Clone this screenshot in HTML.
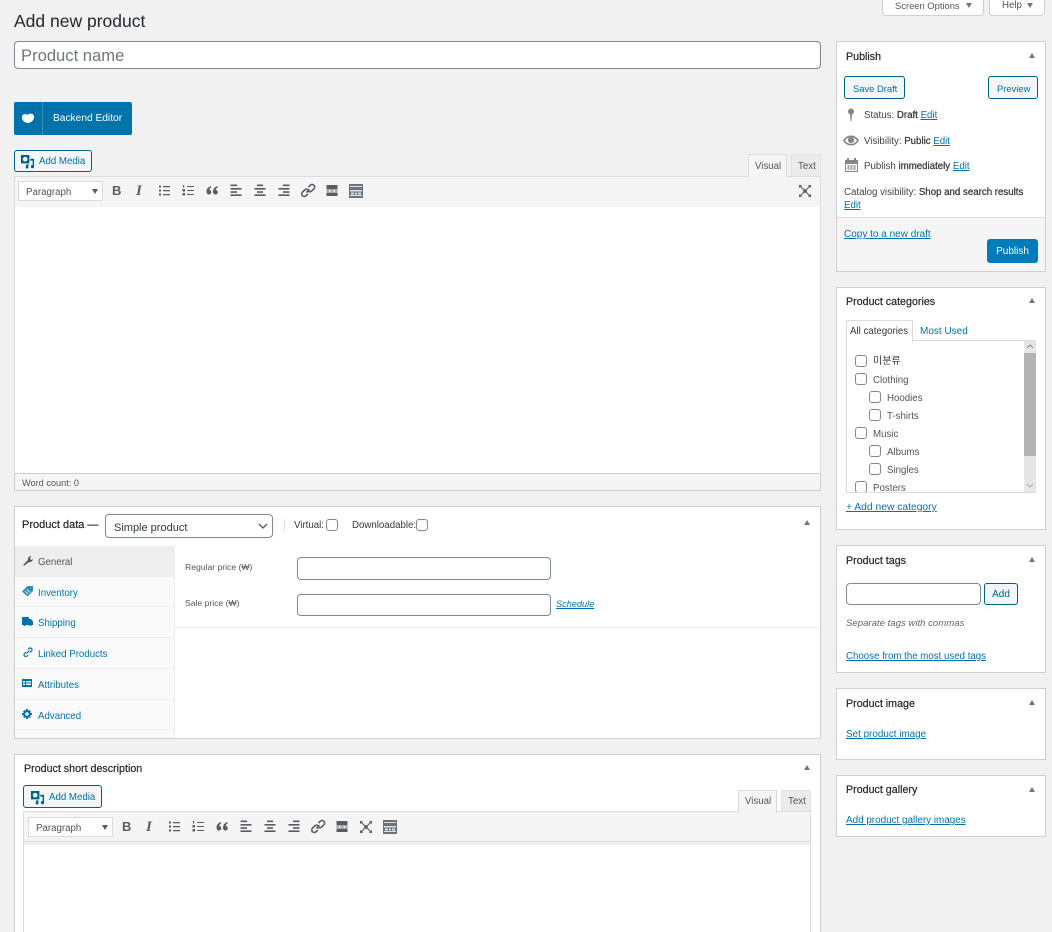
<!DOCTYPE html>
<html lang="en"><head><meta charset="utf-8"><title>Add new product</title>
<style>
html,body{margin:0;padding:0;width:1052px;height:932px;overflow:hidden;background:#f1f1f1}
body{position:relative;font-family:"Liberation Sans","Noto Sans CJK KR",sans-serif;font-size:9.7px;color:#444}
div,span,a,svg{position:absolute;box-sizing:border-box;white-space:nowrap}
a,.l{color:#0073aa;text-decoration:underline}
.t{line-height:14px}
.h{font-size:10.7px;color:#23282d;line-height:14px;font-weight:normal;-webkit-text-stroke:.2px #23282d}
.m{-webkit-text-stroke:.25px #32373c;color:#32373c}
.box{background:#fff;border:1px solid #ccd0d4}
.btn{background:#f3f5f6;border:1px solid #016087;border-radius:3px;color:#016087;text-align:center}
.inp{background:#fff;border:1px solid #7e8993;border-radius:4px}
.cb{width:12px;height:12px;background:#fff;border:1px solid #7e8993;border-radius:3px}
.tri{width:0;height:0;border-left:3.5px solid transparent;border-right:3.5px solid transparent;border-bottom:5px solid #72777c}
.tb{background:#f5f5f5;border:1px solid #dcdcde}
.ic{width:20px;height:20px;fill:#555d66}
</style></head><body>
<svg width="0" height="0" style="left:0;top:0"><defs>
<symbol id="ul" viewBox="0 0 20 20"><path d="M5 4.500h2v2H5zM9 5h7v1.200H9zM5 8.500h2v2H5zM9 9h7v1.200H9zM5 12.500h2v2H5zM9 13h7v1.200H9z"/></symbol>
<symbol id="ol" viewBox="0 0 20 20"><path d="M5 4h1.200v2.500H5zM4.500 8h2.500v2.500H4.500zM4.500 12h2.500v2.500H4.500zM9 5h7v1H9zM9 9h7v1H9zM9 13h7v1H9z"/></symbol>
<symbol id="q" viewBox="0 0 20 20"><path d="M9 5C6.500 5.800 4.500 7.800 4.500 10.500 4.500 12.500 5.800 13.500 7 13.500S9.300 12.500 9.300 11.200 8.300 9 7.200 9c0-1 .8-2 1.800-2.400zM15.500 5C13 5.800 11 7.800 11 10.500c0 2 1.300 3 2.500 3s2.300-1 2.300-2.300-1-2.200-2.100-2.200c0-1 .8-2 1.800-2.400z"/></symbol>
<symbol id="al" viewBox="0 0 20 20"><path d="M4.500 3.500h6.500v1.600H4.500zM4.500 7h11v1.600h-11zM4.500 10.300h6.500v1.600H4.500zM4.500 13.400h11v1.600h-11z"/></symbol>
<symbol id="ac" viewBox="0 0 20 20"><path d="M7 3.500h6v1.600H7zM4.500 7h11v1.600h-11zM7 10.300h6v1.600H7zM4.500 13.400h11v1.600h-11z"/></symbol>
<symbol id="ar" viewBox="0 0 20 20"><path d="M9 3.500h6.500v1.600H9zM4.500 7h11v1.600h-11zM9 10.300h6.500v1.600H9zM4.500 13.400h11v1.600h-11z"/></symbol>
<symbol id="ln" viewBox="0 0 20 20"><path d="M8.500 11.500 11.500 8.500M10.500 6l1.800-1.800a2.600 2.600 0 0 1 3.500 0l.1.100a2.600 2.600 0 0 1 0 3.500l-2.300 2.300a2.600 2.600 0 0 1-3.500 0M9.800 13 8 14.800a2.600 2.600 0 0 1-3.500 0l-.1-.1a2.600 2.600 0 0 1 0-3.500l2.300-2.300a2.600 2.600 0 0 1 3.500 0" fill="none" stroke="#555d66" stroke-width="1.600"/></symbol>
<symbol id="hr" viewBox="0 0 20 20"><path d="M4.500 4h11v4.500h-11zM4.500 9.500h2.500v1H4.500zM8.500 9.500H11.500v1H8.500zM13 9.500h2.500v1H13zM4.500 11.500h11V15h-11z"/></symbol>
<symbol id="kt" viewBox="0 0 20 20"><path d="M3 3h14v14H3z" fill="#6b7278"/><path d="M4 5h12v1H4zM4 9h12v1.500H4zM4 14h12v1H4z" fill="#dfe1e3"/><path d="M5 11.500h3v2H5zM9 11.500h2v2H9zM12 11.500h3v2h-3z" fill="#dfe1e3"/></symbol>
<symbol id="fs" viewBox="0 0 20 20"><path d="M8.200 8.200h3.600v3.600H8.200z"/><path d="M5 5l3.500 3.500M15 5l-3.500 3.500M5 15l3.500-3.500M15 15l-3.500-3.500" stroke="#555d66" stroke-width="1.100" fill="none"/><path d="M4 4h2.600v1.100H5.100v1.500H4zM16 4v2.600h-1.100V5.100h-1.500V4zM4 16v-2.600h1.100v1.500h1.500V16zM16 16h-2.600v-1.100h1.500v-1.500H16z"/></symbol>
<symbol id="am" viewBox="0 0 16 16"><path d="M1 1h9v9H1zM5.500 3a2.500 2.500 0 1 0 0 5 2.500 2.500 0 0 0 0-5z" fill="#016087" fill-rule="evenodd"/><path d="M11 5h4v8.500a1.700 1.700 0 1 1-1.500-1.700V7H11zM6.500 11H9v3a1.500 1.500 0 1 1-2.500-1.100z" fill="#016087"/></symbol>
</defs></svg>

<!-- top tabs -->
<div style="left:882px;top:-1px;width:102px;height:17px;background:#fff;border:1px solid #ccd0d4;border-radius:0 0 4px 4px"></div>
<span class="t" style="left:895px;top:-2px;color:#555;font-size:9.4px;margin-top:1px">Screen Options</span>
<span style="left:966px;top:3px;width:0;height:0;border-left:3px solid transparent;border-right:3px solid transparent;border-top:5px solid #72777c"></span>
<div style="left:989px;top:-1px;width:56px;height:17px;background:#fff;border:1px solid #ccd0d4;border-radius:0 0 4px 4px"></div>
<span class="t" style="left:1002px;top:-1px;color:#555">Help</span>
<span style="left:1027px;top:3px;width:0;height:0;border-left:3px solid transparent;border-right:3px solid transparent;border-top:5px solid #72777c"></span>

<span style="left:14px;top:10px;font-size:17.500px;line-height:22px;color:#23282d">Add new product</span>

<div class="inp" style="left:14px;top:41px;width:807px;height:28px"></div>
<span style="left:21px;top:45px;font-size:16.600px;line-height:22px;color:#72777c">Product name</span>

<!-- backend editor -->
<div style="left:14px;top:102px;width:118px;height:33px;background:#0073aa;border-radius:2px"></div>
<div style="left:42px;top:102px;width:1px;height:33px;background:#3a8fb7"></div>
<svg style="left:21px;top:113px" width="14" height="11" viewBox="0 0 14 11"><path d="M1 4C1 1 5 0 6.500 2 8 0 13 0 13 4 13 8 9 10 7 10 4 10 1 8 1 4z" fill="#fff"/></svg>
<span class="t" style="left:53px;top:112px;font-size:10.200px;color:#fff">Backend Editor</span>

<!-- add media -->
<div class="btn" style="left:14px;top:150px;width:78px;height:22px"></div>
<svg style="left:20px;top:154px" width="15" height="15"><use href="#am"/></svg>
<span class="t" style="left:39px;top:155px;color:#0071a1">Add Media</span>

<!-- tabs -->
<div style="left:748px;top:154px;width:39px;height:23px;background:#f5f5f5;border:1px solid #dcdcde;border-bottom:0;z-index:2"></div>
<span class="t" style="left:755px;top:160px;color:#555;z-index:3">Visual</span>
<div style="left:791px;top:154px;width:30px;height:22px;background:#ebebeb;border:1px solid #e2e2e2;border-bottom:0"></div>
<span class="t" style="left:798px;top:160px;color:#555">Text</span>

<!-- main editor -->
<div class="tb" style="left:14px;top:176px;width:807px;height:32px"></div>
<div style="left:18px;top:181px;width:85px;height:20px;background:#fff;border:1px solid #dcdcde"></div>
<span class="t" style="left:26px;top:185px;color:#555;margin-top:1px">Paragraph</span>
<span style="left:92px;top:189px;width:0;height:0;border-left:3.500px solid transparent;border-right:3.500px solid transparent;border-top:5px solid #555d66"></span>
<span style="left:112px;top:183px;font:bold 13px/16px 'Liberation Sans',sans-serif;color:#555d66">B</span>
<span style="left:136px;top:183px;font:italic bold 15px/17px 'Liberation Serif',serif;color:#555d66">I</span>
<svg class="ic" style="left:154px;top:181px"><use href="#ul"/></svg>
<svg class="ic" style="left:178px;top:181px"><use href="#ol"/></svg>
<svg class="ic" style="left:202px;top:181px"><use href="#q"/></svg>
<svg class="ic" style="left:226px;top:181px"><use href="#al"/></svg>
<svg class="ic" style="left:250px;top:181px"><use href="#ac"/></svg>
<svg class="ic" style="left:274px;top:181px"><use href="#ar"/></svg>
<svg class="ic" style="left:298px;top:181px"><use href="#ln"/></svg>
<svg class="ic" style="left:322px;top:181px"><use href="#hr"/></svg>
<svg class="ic" style="left:346px;top:181px"><use href="#kt"/></svg>
<svg class="ic" style="left:795px;top:181px"><use href="#fs"/></svg>
<div style="left:14px;top:207px;width:807px;height:267px;background:#fff;border-left:1px solid #dcdcde;border-right:1px solid #dcdcde"></div>
<div style="left:14px;top:473px;width:807px;height:18px;background:#f5f5f5;border:1px solid #ccd0d4"></div>
<span class="t" style="left:22px;top:475px;color:#555;font-size:9.200px;margin-top:1px">Word count: 0</span>

<!-- product data -->
<div class="box" style="left:14px;top:506px;width:807px;height:233px"></div>
<span class="h" style="left:22px;top:518px;font-size:11px">Product data —</span>
<div class="inp" style="left:105px;top:514px;width:168px;height:24px"></div>
<span class="t" style="left:114px;top:521px;font-size:11px;color:#32373c">Simple product</span>
<svg style="left:258px;top:523px" width="10" height="7"><path d="M1 1l4 4 4-4" fill="none" stroke="#555" stroke-width="1.300"/></svg>
<div style="left:284px;top:519px;width:1px;height:12px;background:#ddd"></div>
<span class="t" style="left:294px;top:519px;color:#32373c">Virtual:</span>
<div class="cb" style="left:326px;top:519px"></div>
<span class="t" style="left:352px;top:519px;color:#32373c">Downloadable:</span>
<div class="cb" style="left:416px;top:519px"></div>
<div class="tri" style="left:804px;top:520px"></div>

<div style="left:15px;top:546px;width:160px;height:192px;background:#fafafa;border-right:1px solid #eee"></div>
<div style="left:15px;top:546px;width:160px;height:31px;background:#eee"></div>
<div style="left:15px;top:606px;width:159px;height:1px;background:#eee"></div>
<div style="left:15px;top:637px;width:159px;height:1px;background:#eee"></div>
<div style="left:15px;top:668px;width:159px;height:1px;background:#eee"></div>
<div style="left:15px;top:699px;width:159px;height:1px;background:#eee"></div>
<div style="left:15px;top:729px;width:159px;height:1px;background:#eee"></div>

<svg style="left:22px;top:555px" width="11" height="11" viewBox="0 0 11 11"><path d="M1 10 6 5C5.500 3 7 1 9.500 1L8 3l.5 1.500L10 5l1-1.500C11 6 9 7.500 7 7l-4.500 3.500z" fill="#555"/></svg>
<span class="t" style="left:38px;top:555px;color:#555;margin-top:1px">General</span>
<svg style="left:22px;top:586px" width="11" height="11" viewBox="0 0 11 11"><path d="M0 5.500 5.500 0H11V5L5.500 10.500z" fill="#0073aa" opacity=".8"/><path d="M3 5l3 3M5 3.500l3 3" stroke="#fff" stroke-width=".8"/></svg>
<span class="t" style="left:38px;top:587px;color:#0073aa">Inventory</span>
<svg style="left:22px;top:616px" width="11" height="11" viewBox="0 0 11 11"><path d="M0 1h7v2h2l2 2.500V9H9.500a1 1 0 0 1-2 0h-4a1 1 0 0 1-2 0H0z" fill="#0073aa"/></svg>
<span class="t" style="left:38px;top:617px;color:#0073aa">Shipping</span>
<svg style="left:23px;top:647px" width="10" height="11" viewBox="0 0 10 11"><path d="M3.500 6.500l3-3M5 2.500 6 1.500a1.700 1.700 0 0 1 2.500 2.500L7 5.500M5 8 4 9a1.700 1.700 0 0 1-2.500-2.500L3 5" fill="none" stroke="#0073aa" stroke-width="1.200"/></svg>
<span class="t" style="left:38px;top:648px;color:#0073aa">Linked Products</span>
<svg style="left:22px;top:678px" width="10" height="10" viewBox="0 0 10 10"><path d="M0 1h10v8H0zm1 2v1.500h2V3zm3 0v1.500h5V3zM1 5.500V7h2V5.500zm3 0V7h5V5.500z" fill="#0073aa" fill-rule="evenodd"/></svg>
<span class="t" style="left:38px;top:679px;color:#0073aa">Attributes</span>
<svg style="left:22px;top:709px" width="10" height="10" viewBox="0 0 10 10"><circle cx="5" cy="5" r="2.800" fill="none" stroke="#0073aa" stroke-width="2"/><path d="M4 0h2v2H4zM4 8h2v2H4zM0 4h2v2H0zM8 4h2v2H8zM1 2.400 2.400 1l1.200 1.200-1.400 1.400zM7.600 1 9 2.400 7.800 3.600 6.400 2.200zM1 7.600l1.200-1.200 1.400 1.400L2.400 9zM7.800 6.400 9 7.600 7.600 9 6.400 7.800z" fill="#0073aa"/></svg>
<span class="t" style="left:38px;top:710px;color:#0073aa">Advanced</span>

<span class="t" style="left:185px;top:560px;color:#555;font-size:8.600px">Regular price (₩)</span>
<div class="inp" style="left:297px;top:557px;width:254px;height:23px"></div>
<span class="t" style="left:185px;top:596px;color:#555;font-size:8.600px">Sale price (₩)</span>
<div class="inp" style="left:297px;top:594px;width:254px;height:22px"></div>
<a class="t" style="left:556px;top:597px;font-style:italic;font-size:9.200px">Schedule</a>
<div style="left:175px;top:627px;width:645px;height:1px;background:#eee"></div>

<!-- short description -->
<div class="box" style="left:14px;top:754px;width:807px;height:190px"></div>
<span class="h" style="left:24px;top:762px">Product short description</span>
<div class="tri" style="left:804px;top:765px"></div>
<div class="btn" style="left:23px;top:785px;width:79px;height:23px"></div>
<svg style="left:30px;top:790px" width="15" height="15"><use href="#am"/></svg>
<span class="t" style="left:49px;top:791px;color:#0071a1">Add Media</span>
<div style="left:738px;top:790px;width:39px;height:23px;background:#f5f5f5;border:1px solid #dcdcde;border-bottom:0;z-index:2"></div>
<span class="t" style="left:745px;top:795px;color:#555;z-index:3">Visual</span>
<div style="left:781px;top:790px;width:30px;height:22px;background:#ebebeb;border:1px solid #e2e2e2;border-bottom:0"></div>
<span class="t" style="left:788px;top:795px;color:#555">Text</span>
<div class="tb" style="left:23px;top:811px;width:788px;height:31px"></div>
<div style="left:24px;top:842px;width:786px;height:3px;background:#f0f0f0"></div>
<div style="left:23px;top:842px;width:1px;height:100px;background:#dcdcde"></div>
<div style="left:810px;top:842px;width:1px;height:100px;background:#dcdcde"></div>
<div style="left:28px;top:817px;width:85px;height:20px;background:#fff;border:1px solid #dcdcde"></div>
<span class="t" style="left:36px;top:822px;color:#555">Paragraph</span>
<span style="left:102px;top:825px;width:0;height:0;border-left:3.500px solid transparent;border-right:3.500px solid transparent;border-top:5px solid #555d66"></span>
<span style="left:122px;top:819px;font:bold 13px/16px 'Liberation Sans',sans-serif;color:#555d66">B</span>
<span style="left:146px;top:819px;font:italic bold 15px/17px 'Liberation Serif',serif;color:#555d66">I</span>
<svg class="ic" style="left:164px;top:817px"><use href="#ul"/></svg>
<svg class="ic" style="left:188px;top:817px"><use href="#ol"/></svg>
<svg class="ic" style="left:212px;top:817px"><use href="#q"/></svg>
<svg class="ic" style="left:236px;top:817px"><use href="#al"/></svg>
<svg class="ic" style="left:260px;top:817px"><use href="#ac"/></svg>
<svg class="ic" style="left:284px;top:817px"><use href="#ar"/></svg>
<svg class="ic" style="left:308px;top:817px"><use href="#ln"/></svg>
<svg class="ic" style="left:332px;top:817px"><use href="#hr"/></svg>
<svg class="ic" style="left:356px;top:817px"><use href="#fs"/></svg>
<svg class="ic" style="left:380px;top:817px"><use href="#kt"/></svg>

<!-- publish -->
<div class="box" style="left:836px;top:41px;width:210px;height:231px"></div>
<span class="h" style="left:846px;top:50px">Publish</span>
<div class="tri" style="left:1029px;top:53px"></div>
<div class="btn" style="left:844px;top:76px;width:61px;height:23px"></div>
<span class="t" style="left:853px;top:82px;color:#0071a1;font-size:9.400px">Save Draft</span>
<div class="btn" style="left:988px;top:76px;width:50px;height:23px"></div>
<span class="t" style="left:997px;top:82px;color:#0071a1;font-size:9.400px">Preview</span>
<svg style="left:846px;top:108px" width="10" height="14" viewBox="0 0 10 14"><circle cx="5" cy="3.500" r="3" fill="#82878c"/><path d="M4 6h2l-.5 7h-1z" fill="#82878c"/></svg>
<span class="t" style="left:864px;top:109px;color:#444">Status: <span class="m" style="position:static">Draft</span> <a style="position:static">Edit</a></span>
<svg style="left:843px;top:134px" width="16" height="13" viewBox="0 0 16 13"><path d="M0 6.500C2 3 5 1.500 8 1.500s6 1.500 8 5c-2 3.500-5 5-8 5s-6-1.500-8-5z" fill="#82878c"/><path d="M2 6.500C3.500 4.500 5.500 3 8 3s4.500 1.500 6 3.500C12.500 8.500 10.500 10 8 10S3.500 8.500 2 6.500z" fill="#fff"/><circle cx="8" cy="6" r="3.200" fill="#82878c"/></svg>
<span class="t" style="left:864px;top:135px">Visibility: <span class="m" style="position:static">Public</span> <a style="position:static">Edit</a></span>
<svg style="left:845px;top:158px" width="13" height="14" viewBox="0 0 13 14"><path d="M0 2h2V0h2v2h5V0h2v2h2v12H0zm1 4v7h11V6z" fill="#82878c" fill-rule="evenodd"/><path d="M2.500 7h2v5h-2zM5.500 7h2v5h-2zM8.500 7h2v5h-2z" fill="#a0a5aa"/></svg>
<span class="t" style="left:864px;top:160px">Publish <span class="m" style="position:static">immediately</span> <a style="position:static">Edit</a></span>
<span class="t" style="left:844px;top:186px">Catalog visibility: <span class="m" style="position:static">Shop and search results</span></span>
<a class="t" style="left:844px;top:199px">Edit</a>
<div style="left:837px;top:217px;width:208px;height:54px;background:#f5f5f5;border-top:1px solid #dcdcde"></div>
<a class="t" style="left:844px;top:227px;font-size:10px;margin-top:1px">Copy to a new draft</a>
<div style="left:987px;top:239px;width:51px;height:24px;background:#007cba;border-radius:3px;color:#fff;text-align:center;line-height:26px;font-size:10px">Publish</div>

<!-- categories -->
<div class="box" style="left:836px;top:287px;width:210px;height:243px"></div>
<span class="h" style="left:846px;top:295px">Product categories</span>
<div class="tri" style="left:1029px;top:298px"></div>
<div style="left:846px;top:320px;width:67px;height:22px;background:#fff;border:1px solid #dcdcde;border-bottom:0;z-index:2"></div>
<span class="t" style="left:850px;top:325px;color:#32373c;z-index:3">All categories</span>
<span class="t" style="left:920px;top:325px;color:#0073aa;font-size:10px">Most Used</span>
<div style="left:846px;top:340px;width:190px;height:153px;border:1px solid #dcdcde;border-right:0;overflow:hidden;background:#fff">
<div style="left:177px;top:0;width:12px;height:151px;background:#e6e6e6"></div>
<div style="left:177px;top:12px;width:12px;height:103px;background:#b3b3b3"></div>
<svg style="left:179px;top:3px" width="8" height="6"><path d="M1 4l3-3 3 3" fill="none" stroke="#888"/></svg>
<svg style="left:179px;top:142px" width="8" height="6"><path d="M1 1l3 3 3-3" fill="none" stroke="#aaa"/></svg>
<div class="cb" style="left:8px;top:14px"></div><span class="t" style="left:26px;top:14px;color:#32373c;font-size:10px">미분류</span>
<div class="cb" style="left:8px;top:32px"></div><span class="t" style="left:26px;top:33px;color:#555">Clothing</span>
<div class="cb" style="left:22px;top:50px"></div><span class="t" style="left:40px;top:51px;color:#555">Hoodies</span>
<div class="cb" style="left:22px;top:68px"></div><span class="t" style="left:40px;top:69px;color:#555">T-shirts</span>
<div class="cb" style="left:8px;top:86px"></div><span class="t" style="left:26px;top:87px;color:#555">Music</span>
<div class="cb" style="left:22px;top:104px"></div><span class="t" style="left:40px;top:105px;color:#555">Albums</span>
<div class="cb" style="left:22px;top:122px"></div><span class="t" style="left:40px;top:123px;color:#555">Singles</span>
<div class="cb" style="left:8px;top:140px"></div><span class="t" style="left:26px;top:141px;color:#555">Posters</span>
</div>
<a class="t" style="left:846px;top:501px;font-size:10.300px">+ Add new category</a>

<!-- tags -->
<div class="box" style="left:836px;top:545px;width:210px;height:128px"></div>
<span class="h" style="left:846px;top:554px">Product tags</span>
<div class="tri" style="left:1029px;top:557px"></div>
<div class="inp" style="left:846px;top:583px;width:135px;height:22px"></div>
<div class="btn" style="left:984px;top:583px;width:34px;height:22px;line-height:21px;color:#016087;font-size:10px">Add</div>
<span class="t" style="left:846px;top:617px;font-style:italic;color:#666;font-size:9.600px">Separate tags with commas</span>
<a class="t" style="left:846px;top:650px">Choose from the most used tags</a>

<!-- image -->
<div class="box" style="left:836px;top:688px;width:210px;height:72px"></div>
<span class="h" style="left:846px;top:697px">Product image</span>
<div class="tri" style="left:1029px;top:700px"></div>
<a class="t" style="left:846px;top:728px;font-size:9.900px">Set product image</a>

<!-- gallery -->
<div class="box" style="left:836px;top:775px;width:210px;height:62px"></div>
<span class="h" style="left:846px;top:783px">Product gallery</span>
<div class="tri" style="left:1029px;top:787px"></div>
<a class="t" style="left:846px;top:814px;font-size:9.900px">Add product gallery images</a>
</body></html>
